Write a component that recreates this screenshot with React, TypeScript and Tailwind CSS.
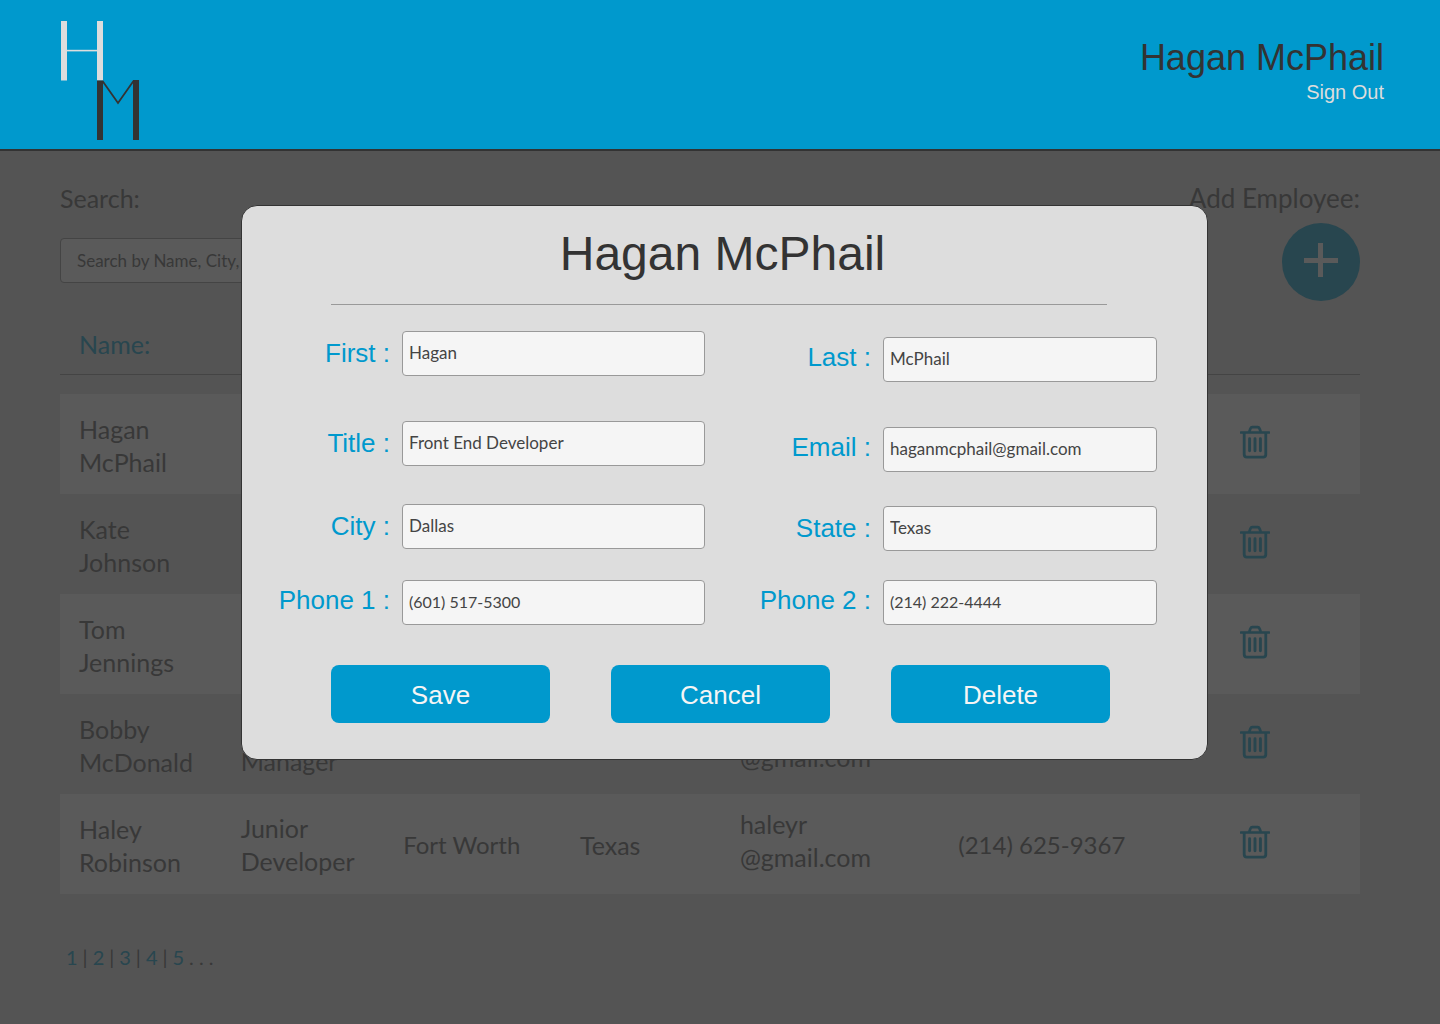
import React from "react";

const lato = "font-[Lato,'Open_Sans',sans-serif]";
const helvetica = "font-['Liberation_Sans',Arial,sans-serif]";

type Employee = {
  name: string[];
  title: string[];
  city: string;
  state: string;
  email: string[];
  phone: string;
};

const employees: Employee[] = [
  { name: ["Hagan", "McPhail"], title: [], city: "", state: "", email: [], phone: "" },
  { name: ["Kate", "Johnson"], title: [], city: "", state: "", email: [], phone: "" },
  { name: ["Tom", "Jennings"], title: [], city: "", state: "", email: [], phone: "" },
  { name: ["Bobby", "McDonald"], title: ["", "Manager"], city: "", state: "", email: ["", "@gmail.com"], phone: "" },
  {
    name: ["Haley", "Robinson"],
    title: ["Junior", "Developer"],
    city: "Fort Worth",
    state: "Texas",
    email: ["haleyr", "@gmail.com"],
    phone: "(214) 625-9367",
  },
];

function Logo() {
  return (
    <svg viewBox="0 0 80 122" className="h-[122px] w-20" role="img" aria-label="HM">
      <g fill="#dddddd">
        <rect x="1" y="1" width="6" height="59.5" />
        <rect x="37" y="1" width="6" height="59.5" />
        <rect x="7" y="29.8" width="30" height="1.6" />
      </g>
      <g fill="#333333">
        <rect x="37" y="60.5" width="6" height="59.5" />
        <rect x="73" y="60" width="6" height="60" />
      </g>
      <path d="M42.5 61 L58 83 L73.5 61" fill="none" stroke="#333333" strokeWidth="1.8" />
    </svg>
  );
}

function TrashIcon() {
  return (
    <svg viewBox="0 0 30 34" className="h-[34px] w-[30px]" fill="none" stroke="#28464f" aria-hidden="true">
      <path d="M1 7.5H29" strokeWidth="2.6" strokeLinecap="round" />
      <path d="M9.2 7 L10.5 3.4 Q11 2.1 12.4 2.1 H17.6 Q19 2.1 19.5 3.4 L20.8 7" strokeWidth="2.7" />
      <path d="M4.2 8 V29.3 Q4.2 32.2 7 32.2 H23 Q25.8 32.2 25.8 29.3 V8" strokeWidth="2.8" />
      <path d="M9.6 13.8V25.8M15 13.8V25.8M20.4 13.8V25.8" strokeWidth="2.9" strokeLinecap="round" />
    </svg>
  );
}

function Lines({ lines }: { lines: string[] }) {
  return (
    <>
      {lines.map((line, i) => (
        <span key={i} className="block h-[33px]">
          {line}
        </span>
      ))}
    </>
  );
}

type FieldProps = {
  id: string;
  label: string;
  value: string;
  className?: string;
  labelLeading?: string;
  textSize?: string;
  type?: string;
};

function Field({
  id,
  label,
  value,
  className = "",
  labelLeading = "leading-[45px]",
  textSize = "text-[17px]",
  type = "text",
}: FieldProps) {
  return (
    <div className={`flex items-start ${className}`}>
      <label htmlFor={id} className={`w-[124px] shrink-0 pr-3 text-right text-[26px] text-[#0099cd] ${labelLeading}`}>
        {label} :
      </label>
      <input
        id={id}
        type={type}
        defaultValue={value}
        className={`h-[45px] w-full min-w-0 rounded border border-[#999999] bg-[#f5f5f5] px-1.5 pb-0.5 text-[#444444] ${textSize} ${lato}`}
      />
    </div>
  );
}

function ActionButton({ children }: { children: React.ReactNode }) {
  return (
    <button type="button" className="h-[58px] flex-1 rounded-lg bg-[#0099cd] pt-0.5 text-[26px] text-[#f5f5f5]">
      {children}
    </button>
  );
}

export default function App() {
  return (
    <div className={`relative min-h-screen bg-[#545454] text-[#383838] ${lato}`}>
      <header className={`flex h-[151px] items-start justify-between border-b-2 border-[#333333] bg-[#0099cd] pr-14 pl-[60px] ${helvetica}`}>
        <div className="pt-5">
          <Logo />
        </div>
        <div className="flex flex-col items-end pt-9">
          <p className="text-4xl leading-[44px] text-[#333333]">Hagan McPhail</p>
          <a href="#" className="text-xl leading-6 text-[#dddddd]">
            Sign Out
          </a>
        </div>
      </header>

      <main className="pt-[30px] pr-20 pl-[60px]">
        <section className="flex justify-between leading-[34px]">
          <div className="flex flex-col gap-[23px]">
            <label htmlFor="search" className="text-[25px]">
              Search:
            </label>
            <input
              id="search"
              type="search"
              placeholder="Search by Name, City,"
              className="h-[45px] w-[300px] rounded border border-[#444444] bg-[#5a5a5a] px-4 text-[17px] placeholder:text-[#383838]"
            />
          </div>
          <div className="flex flex-col items-end gap-2">
            <span id="add-label" className="text-[26px]">
              Add Employee:
            </span>
            <button type="button" aria-labelledby="add-label" className="flex size-[78px] items-center justify-center rounded-full bg-[#28464f] pb-1">
              <svg viewBox="0 0 34 34" className="size-[34px]" stroke="#5a5a5a" strokeWidth="5" aria-hidden="true">
                <path d="M16.5 0V34M0 17.5H34" />
              </svg>
            </button>
          </div>
        </section>

        <table className="w-full table-fixed border-collapse text-left text-[25px] leading-[33px]">
          <colgroup>
            <col className="w-[13.9%]" />
            <col className="w-[12.5%]" />
            <col className="w-[13.6%]" />
            <col className="w-[12.3%]" />
            <col className="w-[16.8%]" />
            <col className="w-[21.7%]" />
            <col className="w-[9.2%]" />
          </colgroup>
          <thead>
            <tr className="h-[73px] border-b border-[#444444]">
              <th scope="col" className="pt-3.5 pl-[19px] font-normal text-[#28464f]">
                Name:
              </th>
              <td colSpan={6} />
            </tr>
            <tr aria-hidden="true">
              <td colSpan={7} className="h-5" />
            </tr>
          </thead>
          <tbody>
            {employees.map((e) => (
              <tr key={e.name.join(" ")} className="h-[100px] odd:bg-[#5a5a5a]">
                <td className="pt-1 pl-[19px]">
                  <Lines lines={e.name} />
                </td>
                <td className="pt-0.5">
                  <Lines lines={e.title} />
                </td>
                <td className="pt-0.5 text-2xl">{e.city}</td>
                <td className="pt-0.5">{e.state}</td>
                <td className="pb-1.5">
                  <Lines lines={e.email} />
                </td>
                <td className="pt-0.5 text-2xl">{e.phone}</td>
                <td className="pb-1">
                  <button type="button" aria-label={`Delete ${e.name.join(" ")}`} className="block">
                    <TrashIcon />
                  </button>
                </td>
              </tr>
            ))}
          </tbody>
        </table>

        <nav aria-label="Pages" className="flex gap-[5px] pt-[51px] pb-10 pl-1.5 text-xl leading-6">
          {["1", "2", "3", "4", "5"].map((page, i) => (
            <React.Fragment key={page}>
              {i > 0 && <span>|</span>}
              <a href="#" className="text-[#28464f]">
                {page}
              </a>
            </React.Fragment>
          ))}
          <span>. . .</span>
        </nav>
      </main>

      <div className="absolute inset-0 flex items-start justify-center pt-[205px] pl-[9px]">
        <div
          role="dialog"
          aria-labelledby="dialog-title"
          className={`w-full max-w-[967px] rounded-2xl border border-[#333333] bg-[#dddddd] pb-9 ${helvetica}`}
        >
          <h1 id="dialog-title" className="pt-5 pr-1 text-center text-5xl leading-[56px] text-[#333333]">
            Hagan McPhail
          </h1>
          <hr className="mt-[22px] mr-[100px] ml-[89px] border-[#999999]" />

          <form>
            <div className="flex justify-between pr-[50px] pl-9">
              <div className="w-[427px] pt-[26px]">
                <Field id="first" label="First" value="Hagan" />
                <Field id="title" label="Title" value="Front End Developer" className="mt-[45px]" />
                <Field id="city" label="City" value="Dallas" className="mt-[38px]" />
                <Field
                  id="phone1"
                  label="Phone 1"
                  value="(601) 517-5300"
                  type="tel"
                  className="mt-[31px]"
                  labelLeading="leading-[41px]"
                  textSize="text-base"
                />
              </div>
              <div className="w-[398px] pt-8">
                <Field id="last" label="Last" value="McPhail" labelLeading="leading-[41px]" />
                <Field
                  id="email"
                  label="Email"
                  value="haganmcphail@gmail.com"
                  type="email"
                  className="mt-[45px]"
                  labelLeading="leading-[41px]"
                />
                <Field id="state" label="State" value="Texas" className="mt-[34px]" />
                <Field
                  id="phone2"
                  label="Phone 2"
                  value="(214) 222-4444"
                  type="tel"
                  className="mt-[29px]"
                  labelLeading="leading-[41px]"
                  textSize="text-base"
                />
              </div>
            </div>
            <div className="mt-10 mr-[97px] ml-[89px] flex gap-[61px]">
              <ActionButton>Save</ActionButton>
              <ActionButton>Cancel</ActionButton>
              <ActionButton>Delete</ActionButton>
            </div>
          </form>
        </div>
      </div>
    </div>
  );
}
